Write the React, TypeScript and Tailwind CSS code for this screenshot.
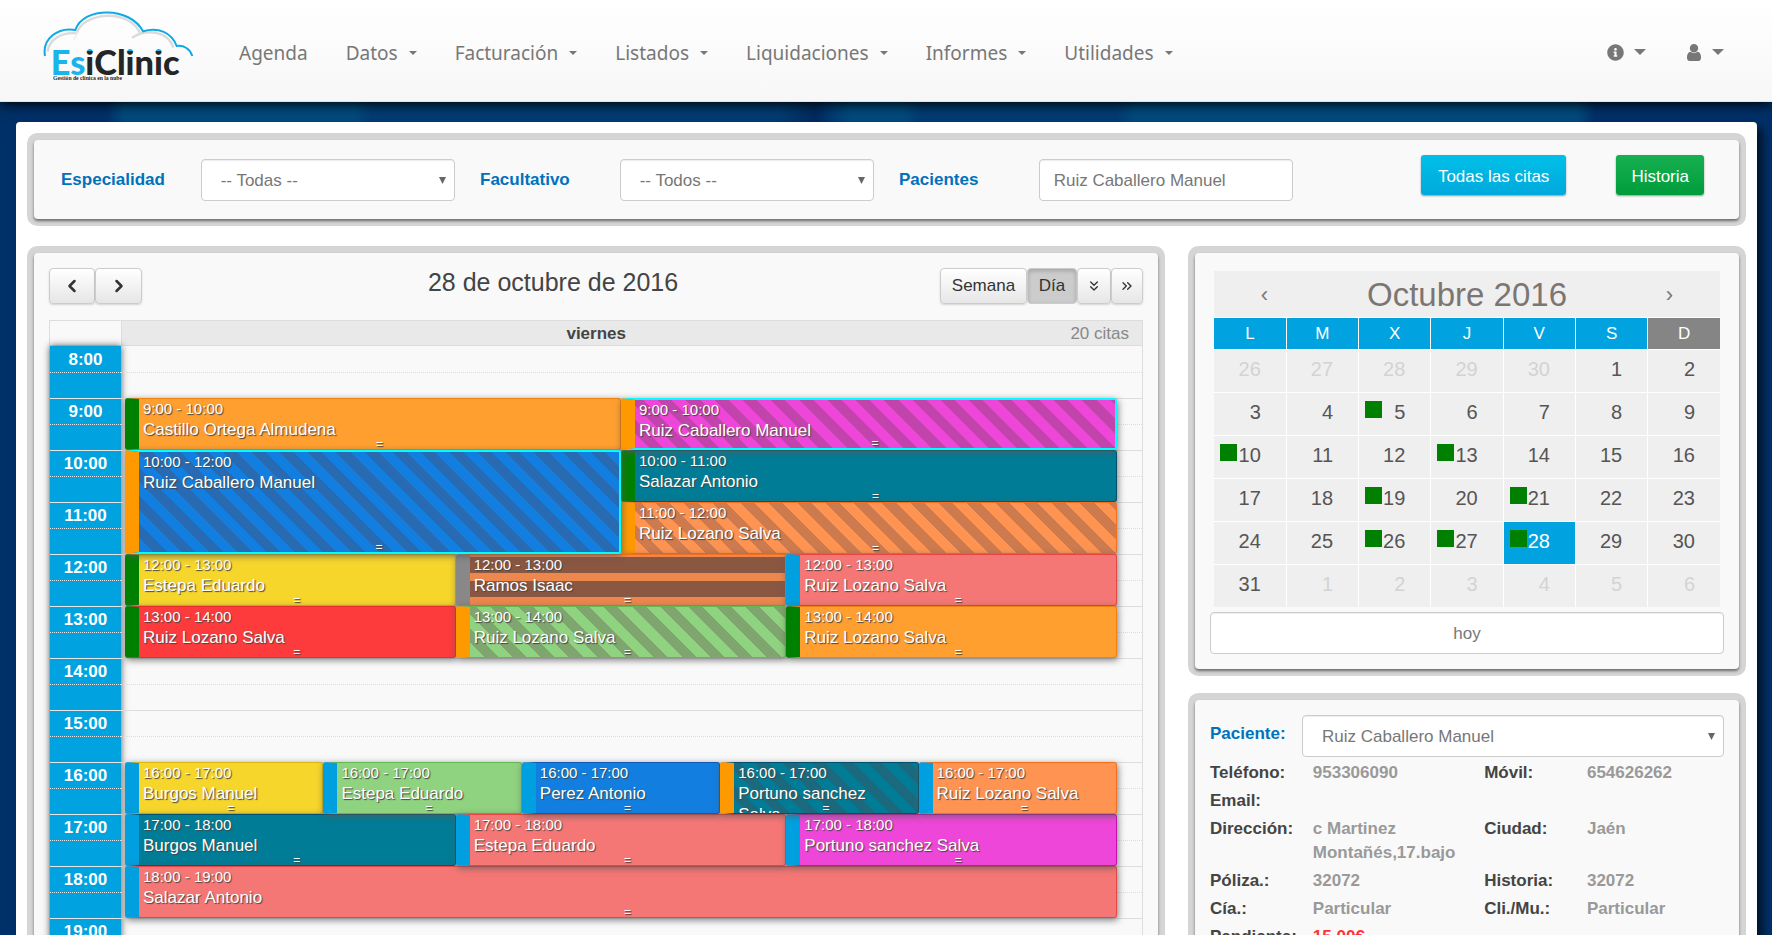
import { useState } from "react";
import { ChevronLeft, ChevronRight, ChevronsDown, ChevronsRight } from "lucide-react";
import { FaInfoCircle } from "react-icons/fa";
import clsx from "clsx";

type Tone = "amber" | "magenta" | "blue" | "teal" | "orange" | "yellow" | "salmon" | "red" | "green";
type Status = "done" | "waiting" | "booked" | "missed";
type Pattern = "diagonal" | "bars";

interface Appointment {
  start: number;
  end: number;
  lane: number;
  lanes: number;
  patient: string;
  tone: Tone;
  status: Status;
  pattern?: Pattern;
  selected?: boolean;
}

const FIRST_HOUR = 8;
const HOURS = [8, 9, 10, 11, 12, 13, 14, 15, 16, 17, 18, 19, 20];
// divisible by 2, 3 and 5 so every lane count fits the same grid
const GRID_UNITS = 30;

const toneClass: Record<Tone, string> = {
  amber: "bg-[#ff9f30] border-[#f08010]",
  magenta: "bg-[#ee46d8] border-[#c410ae]",
  blue: "bg-[#127ee0] border-[#0c5ab8]",
  teal: "bg-[#007c96] border-[#00506e]",
  orange: "bg-[#ff9452] border-[#f4701c]",
  yellow: "bg-[#f6d62a] border-[#dcb80c]",
  salmon: "bg-[#f57775] border-[#e84444]",
  red: "bg-[#fd3b3c] border-[#e82c30]",
  green: "bg-[#8fd27f] border-[#64b854]",
};

const statusClass: Record<Status, string> = {
  done: "border-l-[#008000]",
  waiting: "border-l-[#ff9900]",
  booked: "border-l-[#00a0e0]",
  missed: "border-l-[#888888]",
};

const patternClass: Record<Pattern, string> = {
  diagonal:
    "bg-[repeating-linear-gradient(45deg,transparent_0,transparent_10px,rgba(90,62,70,0.3)_10px,rgba(90,62,70,0.3)_20px)]",
  bars: "bg-[repeating-linear-gradient(0deg,rgba(128,60,50,0.15)_0,rgba(128,60,50,0.15)_8px,rgba(60,46,54,0.6)_8px,rgba(60,46,54,0.6)_24px)]",
};

const appointments: Appointment[] = [
  { start: 9, end: 10, lane: 0, lanes: 2, patient: "Castillo Ortega Almudena", tone: "amber", status: "done" },
  { start: 9, end: 10, lane: 1, lanes: 2, patient: "Ruiz Caballero Manuel", tone: "magenta", status: "waiting", pattern: "diagonal", selected: true },
  { start: 10, end: 12, lane: 0, lanes: 2, patient: "Ruiz Caballero Manuel", tone: "blue", status: "waiting", pattern: "diagonal", selected: true },
  { start: 10, end: 11, lane: 1, lanes: 2, patient: "Salazar Antonio", tone: "teal", status: "done" },
  { start: 11, end: 12, lane: 1, lanes: 2, patient: "Ruiz Lozano Salva", tone: "orange", status: "waiting", pattern: "diagonal" },
  { start: 12, end: 13, lane: 0, lanes: 3, patient: "Estepa Eduardo", tone: "yellow", status: "done" },
  { start: 12, end: 13, lane: 1, lanes: 3, patient: "Ramos Isaac", tone: "orange", status: "missed", pattern: "bars" },
  { start: 12, end: 13, lane: 2, lanes: 3, patient: "Ruiz Lozano Salva", tone: "salmon", status: "booked" },
  { start: 13, end: 14, lane: 0, lanes: 3, patient: "Ruiz Lozano Salva", tone: "red", status: "done" },
  { start: 13, end: 14, lane: 1, lanes: 3, patient: "Ruiz Lozano Salva", tone: "green", status: "waiting", pattern: "diagonal" },
  { start: 13, end: 14, lane: 2, lanes: 3, patient: "Ruiz Lozano Salva", tone: "amber", status: "done" },
  { start: 16, end: 17, lane: 0, lanes: 5, patient: "Burgos Manuel", tone: "yellow", status: "booked" },
  { start: 16, end: 17, lane: 1, lanes: 5, patient: "Estepa Eduardo", tone: "green", status: "booked" },
  { start: 16, end: 17, lane: 2, lanes: 5, patient: "Perez Antonio", tone: "blue", status: "booked" },
  { start: 16, end: 17, lane: 3, lanes: 5, patient: "Portuno sanchez Salva", tone: "teal", status: "waiting", pattern: "diagonal" },
  { start: 16, end: 17, lane: 4, lanes: 5, patient: "Ruiz Lozano Salva", tone: "orange", status: "booked" },
  { start: 17, end: 18, lane: 0, lanes: 3, patient: "Burgos Manuel", tone: "teal", status: "booked" },
  { start: 17, end: 18, lane: 1, lanes: 3, patient: "Estepa Eduardo", tone: "salmon", status: "booked" },
  { start: 17, end: 18, lane: 2, lanes: 3, patient: "Portuno sanchez Salva", tone: "magenta", status: "booked" },
  { start: 18, end: 19, lane: 0, lanes: 1, patient: "Salazar Antonio", tone: "salmon", status: "booked" },
];

const menus = ["Datos", "Facturación", "Listados", "Liquidaciones", "Informes", "Utilidades"];

const weekDays = ["L", "M", "X", "J", "V", "S", "D"];
const weeks = [
  [26, 27, 28, 29, 30, 1, 2],
  [3, 4, 5, 6, 7, 8, 9],
  [10, 11, 12, 13, 14, 15, 16],
  [17, 18, 19, 20, 21, 22, 23],
  [24, 25, 26, 27, 28, 29, 30],
  [31, 1, 2, 3, 4, 5, 6],
];
const busyDays = [5, 10, 13, 19, 21, 26, 27, 28];

const patientRows = [
  [["Teléfono:", "953306090"], ["Móvil:", "654626262"]],
  [["Email:", ""], ["", ""]],
  [["Dirección:", "c Martinez Montañés,17.bajo"], ["Ciudad:", "Jaén"]],
  [["Póliza.:", "32072"], ["Historia:", "32072"]],
  [["Cía.:", "Particular"], ["Cli./Mu.:", "Particular"]],
  [["Pendiente:", "15,00€"], ["", ""]],
];

const panel = "rounded-[4px] bg-[#f9f9f9] shadow-[0_2px_3px_rgba(0,0,0,0.5),0_0_0_7px_#d5d5d5]";
const field =
  "h-[42px] w-full rounded-[4px] border border-[#cccccc] bg-white pt-[2px] text-[17px] text-[#777777] outline-none shadow-[inset_0_1px_1px_rgba(0,0,0,0.075)]";
const toolButton =
  "flex h-9 items-center justify-center rounded-[4px] border border-[#cccccc] text-[17px] text-[#333333]";
const toolButtonIdle = "bg-linear-to-b from-white to-[#e6e6e6] shadow-[0_1px_2px_rgba(0,0,0,0.15)]";

function Caret({ large }: { large?: boolean }) {
  return (
    <svg viewBox="0 0 8 4" className={large ? "h-[6px] w-3" : "h-1 w-2"} fill="currentColor" aria-hidden="true">
      <path d="M0 0h8L4 4z" />
    </svg>
  );
}

function Logo() {
  return (
    <svg viewBox="36 36 456 240" className="h-20 w-[152px] shrink-0" role="img" aria-label="EsiClinic">
      <defs>
        <linearGradient id="dotted" gradientUnits="userSpaceOnUse" x1="0" y1="130" x2="0" y2="230">
          <stop offset="0.27" stopColor="#19b4ea" />
          <stop offset="0.27" stopColor="#222626" />
        </linearGradient>
      </defs>
      <g fill="none" stroke="#c4c4c4" strokeWidth="7" opacity="0.6">
        <path d="M53 158C56 125 90 98 142 103" />
        <path d="M140 106C152 40 300 24 332 106" />
        <path d="M306 116C350 88 414 96 430 146" />
      </g>
      <g fill="none" stroke="#efefef" strokeWidth="5">
        <path d="M132 124C134 116 138 108 144 100" />
      </g>
      <path
        d="M45 171C36 118 84 84 136 93C160 22 300 22 339 97C386 84 424 100 440 141C462 138 480 150 487 171"
        fill="none"
        stroke="#0fa9e6"
        strokeWidth="6"
      />
      <text x="62" y="228" fontSize="103" fontWeight="900" fontFamily="Lato, sans-serif">
        <tspan fill="#19b4ea">Es</tspan>
        <tspan fill="url(#dotted)">i</tspan>
        <tspan fill="#222626">Cl</tspan>
        <tspan fill="url(#dotted)">i</tspan>
        <tspan fill="#222626">n</tspan>
        <tspan fill="url(#dotted)">i</tspan>
        <tspan fill="#222626">c</tspan>
      </text>
      <text x="69" y="243" fontSize="17" fontWeight="700" fill="#222626" fontFamily="'Liberation Serif', serif">
        Gestión de clínica en la nube
      </text>
    </svg>
  );
}

function SelectField({ id, value }: { id: string; value: string }) {
  return (
    <div className="relative">
      <select id={id} defaultValue={value} className={clsx(field, "appearance-none pr-6 pl-[19px]")}>
        <option>{value}</option>
      </select>
      <svg
        viewBox="0 0 7 7"
        className="pointer-events-none absolute top-[18px] right-[9px] size-[7px] fill-[#666666]"
        aria-hidden="true"
      >
        <path d="M0 0h7L3.500 7z" />
      </svg>
    </div>
  );
}

function Header() {
  return (
    <header className="relative z-10 flex h-[102px] items-center border-b border-[#e4e4e4] bg-linear-to-b from-white to-[#f7f7f7] pr-12 pl-[42px] text-[#777777] shadow-[0_2px_12px_#000000]">
      <Logo />
      <nav className="ml-[45px] flex flex-1 items-center gap-[38px] pt-[5px] font-['Noto_Sans',sans-serif] text-[19px]">
        <a href="#agenda">Agenda</a>
        {menus.map((menu) => (
          <button key={menu} className="flex items-center gap-[11px]">
            {menu}
            <Caret />
          </button>
        ))}
      </nav>
      <div className="flex items-center gap-[41px] pt-[3px]">
        <button className="flex items-center gap-[10px]" aria-label="Información">
          <FaInfoCircle className="size-[17px]" />
          <Caret large />
        </button>
        <button className="flex items-center gap-[11px]" aria-label="Usuario">
          <svg viewBox="256 128 1280 1536" className="h-[17px] w-[14px]" fill="currentColor" aria-hidden="true">
            <path d="M1536 1399q0 109-62.5 187t-150.5 78h-854q-88 0-150.500-78t-62.500-187q0-85 8.500-160.500t31.500-152 58.500-131 94-89 134.500-34.500q131 128 313 128t313-128q76 0 134.500 34.500t94 89 58.500 131 31.500 152 8.500 160.500zm-256-887q0 159-112.500 271.500t-271.500 112.500-271.500-112.500-112.500-271.500 112.500-271.500 271.500-112.500 271.500 112.500 112.500 271.500z" />
          </svg>
          <Caret large />
        </button>
      </div>
    </header>
  );
}

function Filters() {
  const [patient, setPatient] = useState("Ruiz Caballero Manuel");
  const label = "pt-[15px] pl-[15px] text-[17px] leading-5 font-bold text-[#0072bc]";
  const control = "col-span-2 pt-1 pr-[10px] pl-[15px]";

  return (
    <section className={clsx(panel, "grid grid-cols-12 items-start pt-[15px] pr-[17px] pb-[18px] pl-3")}>
      <label htmlFor="especialidad" className={label}>
        Especialidad
      </label>
      <div className={control}>
        <SelectField id="especialidad" value="-- Todas --" />
      </div>
      <label htmlFor="facultativo" className={label}>
        Facultativo
      </label>
      <div className={control}>
        <SelectField id="facultativo" value="-- Todos --" />
      </div>
      <label htmlFor="pacientes" className={label}>
        Pacientes
      </label>
      <div className={control}>
        <input
          id="pacientes"
          type="text"
          value={patient}
          onChange={(e) => setPatient(e.target.value)}
          className={clsx(field, "px-[14px]")}
        />
      </div>
      <div className="col-span-3 flex justify-end gap-[50px] pr-[18px] text-[17px] whitespace-nowrap text-white">
        <button className="h-10 rounded-[3px] bg-linear-to-b from-[#00c0e8] to-[#00a9dc] px-[17px] pt-[3px] shadow-[0_1px_2px_rgba(0,0,0,0.4)]">
          Todas las citas
        </button>
        <button className="h-10 rounded-[3px] bg-linear-to-b from-[#16b050] to-[#009c3c] px-[15px] pt-[3px] shadow-[0_1px_2px_rgba(0,0,0,0.4)]">
          Historia
        </button>
      </div>
    </section>
  );
}

function AppointmentCard({ item }: { item: Appointment }) {
  const span = GRID_UNITS / item.lanes;
  return (
    <article
      className={clsx(
        "relative overflow-hidden rounded-[3px] border border-l-[14px] pr-2 pl-1 text-white shadow-[1px_2px_7px_rgba(90,90,90,0.8)] [text-shadow:1px_1px_1px_#444444]",
        toneClass[item.tone],
        item.selected && "border-y-2 border-r-2 border-y-[#00ffff] border-r-[#00ffff]",
        statusClass[item.status],
        item.pattern && patternClass[item.pattern],
        item.pattern === "bars" && "text-[#dddddd]",
      )}
      style={{
        gridColumn: `${item.lane * span + 1} / span ${span}`,
        gridRow: `${item.start - FIRST_HOUR + 1} / span ${item.end - item.start}`,
        zIndex: item.selected ? 10 : item.lane + 1,
      }}
    >
      <div className="text-[15px] leading-5">
        {item.start}:00 - {item.end}:00
      </div>
      <div className="text-[17px] leading-[21px]">{item.patient}</div>
      <span className="absolute inset-x-0 bottom-0 text-center text-[12px] leading-[10px]">=</span>
    </article>
  );
}

function Agenda() {
  return (
    <section className={clsx(panel, "px-[15px] pt-[15px] pb-5")}>
      <div className="flex items-start justify-between">
        <div className="flex">
          <button className={clsx(toolButton, toolButtonIdle, "w-[46px]")} aria-label="Anterior">
            <ChevronLeft className="size-5" strokeWidth={3} />
          </button>
          <button className={clsx(toolButton, toolButtonIdle, "w-[47px]")} aria-label="Siguiente">
            <ChevronRight className="size-5" strokeWidth={3} />
          </button>
        </div>
        <h2 className="pl-6 text-[25px] leading-7 text-[#444444]">28 de octubre de 2016</h2>
        <div className="flex">
          <button className={clsx(toolButton, toolButtonIdle, "w-[87px]")}>Semana</button>
          <button
            className={clsx(toolButton, "w-[50px] border-[#bbbbbb] bg-[#cccccc] shadow-[inset_0_2px_4px_rgba(0,0,0,0.2)]")}
          >
            Día
          </button>
          <button className={clsx(toolButton, toolButtonIdle, "w-[34px]")} aria-label="Mostrar más">
            <ChevronsDown className="size-4" />
          </button>
          <button className={clsx(toolButton, toolButtonIdle, "w-8")} aria-label="Expandir">
            <ChevronsRight className="size-4" />
          </button>
        </div>
      </div>

      <div className="mt-4 border border-[#dddddd]">
        <div className="flex h-[25px] border-b border-[#dddddd] text-[17px] leading-[25px]">
          <div className="w-[72px] border-r border-[#dddddd]" />
          <div className="flex flex-1 bg-[#e9e9e9] pr-[13px]">
            <div className="flex-1 text-center font-bold text-[#444444]">viernes</div>
            <div className="text-[#888888]">20 citas</div>
          </div>
        </div>

        <div className="flex">
          <div className="w-[71px] bg-[#00a3e0] shadow-[0_0_7px_#555555]">
            {HOURS.map((hour) => (
              <div key={hour} className="h-[52px] border-t border-[#e6e6e6] first:border-transparent">
                <div className="h-[26px] border-b border-dotted border-[#e6e6e6] text-center text-[17px] leading-[25px] font-bold text-white">
                  {hour}:00
                </div>
              </div>
            ))}
          </div>
          <div className="relative flex-1">
            {HOURS.map((hour) => (
              <div key={hour} className="h-[52px] border-t border-[#dddddd] first:border-transparent">
                <div className="h-[26px] border-b border-dotted border-[#dddddd]" />
              </div>
            ))}
            <div className="absolute inset-y-0 right-[25px] left-1 grid auto-rows-[52px] grid-cols-[repeat(30,minmax(0,1fr))]">
              {appointments.map((item) => (
                <AppointmentCard key={`${item.start}-${item.lane}`} item={item} />
              ))}
            </div>
          </div>
        </div>
      </div>
    </section>
  );
}

function MonthPicker() {
  const [selected, setSelected] = useState(28);

  return (
    <section className={clsx(panel, "px-[15px] pt-[18px] pb-[15px]")}>
      <div className="mx-1">
        <div className="flex h-[46px] items-center bg-[#efefef] text-[#7c7673]">
          <button className="w-[101px] text-[22px]" aria-label="Mes anterior">
            ‹
          </button>
          <h2 className="flex-1 pt-[2px] text-center text-[33px] leading-10">Octubre 2016</h2>
          <button className="w-[101px] text-[22px]" aria-label="Mes siguiente">
            ›
          </button>
        </div>
        <table className="w-full table-fixed border-collapse">
          <thead>
            <tr>
              {weekDays.map((day) => (
                <th
                  key={day}
                  className="h-8 border-t border-r border-white bg-[#00a3e0] p-0 text-[17px] font-normal text-white last:border-r-0 last:bg-[#858585]"
                >
                  {day}
                </th>
              ))}
            </tr>
          </thead>
          <tbody>
            {weeks.map((week, row) => (
              <tr key={row}>
                {week.map((day, col) => {
                  const outside = (row === 0 && day > 7) || (row === 5 && day < 7);
                  const busy = !outside && busyDays.includes(day);
                  const active = !outside && day === selected;
                  return (
                    <td key={col} className="border-t border-r border-white p-0 last:border-r-0">
                      <button
                        onClick={() => !outside && setSelected(day)}
                        className={clsx(
                          "flex h-[42px] w-full items-start justify-end pt-2 pr-[25px] text-[20px] leading-[23px]",
                          active ? "bg-[#00a3e0] text-white" : "bg-[#efefef]",
                          !active && (outside ? "text-[#d3d3d3]" : "text-[#555555]"),
                        )}
                      >
                        {busy && <span className="mr-auto ml-[6px] size-[17px] bg-[#008000]" />}
                        {day}
                      </button>
                    </td>
                  );
                })}
              </tr>
            ))}
          </tbody>
        </table>
      </div>
      <button className={clsx(field, "mt-[5px] block")} onClick={() => setSelected(28)}>
        hoy
      </button>
    </section>
  );
}

function PatientCard() {
  return (
    <section className={clsx(panel, "px-[15px] pt-[15px] pb-8 text-[17px]")}>
      <div className="flex">
        <label htmlFor="paciente" className="w-[92px] pt-[6px] font-bold text-[#0072bc]">
          Paciente:
        </label>
        <div className="flex-1">
          <SelectField id="paciente" value="Ruiz Caballero Manuel" />
        </div>
      </div>
      <dl className="mt-1 grid grid-cols-[3fr_5fr_3fr_4fr] gap-y-1 leading-6 font-bold">
        {patientRows.flat().map(([term, value], i) => (
          <div key={i} className="contents">
            <dt className="text-[#444444]">{term}</dt>
            <dd className={term === "Pendiente:" ? "text-[#ff3333]" : "text-[#999999]"}>{value}</dd>
          </div>
        ))}
      </dl>
    </section>
  );
}

export default function App() {
  return (
    <div className="h-screen overflow-hidden bg-[#003068] bg-[linear-gradient(90deg,#003068_0_6%,#004a7e_7%_20%,#003c72_21%_44%,#002a5c_46%,#003c72_47%,#004a7e_48%_51%,#003c72_52%_63%,#004a7e_64%_89%,#003068_90%)] font-['Liberation_Sans',Arial,sans-serif]">
      <Header />
      <main className="mt-5 mr-[15px] ml-4 rounded-[4px] bg-white px-[18px] pt-[18px] pb-6 shadow-[6px_6px_10px_rgba(0,0,0,0.6)]">
        <Filters />
        <div className="mt-[34px] grid grid-cols-[1124fr_544fr] items-start gap-x-[37px]">
          <Agenda />
          <div className="flex flex-col gap-[31px]">
            <MonthPicker />
            <PatientCard />
          </div>
        </div>
      </main>
    </div>
  );
}
